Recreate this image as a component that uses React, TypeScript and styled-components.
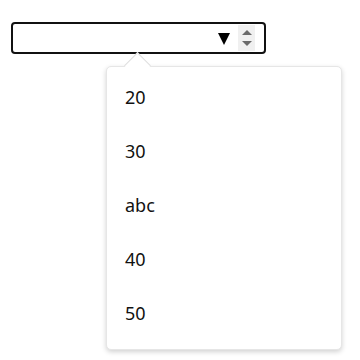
import React from 'react';
import styled, { createGlobalStyle } from 'styled-components';

const GlobalStyle = createGlobalStyle`
  html, body {
    margin: 0;
    padding: 0;
    background: #ffffff;
    font-family: "Noto Sans", "Open Sans", sans-serif;
  }
`;

const options = ['20', '30', 'abc', '40', '50'];

const Page = styled.div`
  width: 360px;
  height: 360px;
  padding: 22px 0 0 11px;
  box-sizing: border-box;
  position: relative;
`;

const Field = styled.div`
  width: 255px;
  height: 32px;
  box-sizing: border-box;
  border: 2px solid #111;
  border-radius: 4px;
  display: flex;
  align-items: center;
  justify-content: flex-end;
  padding-right: 9px;
  gap: 8px;
  background: #fff;
`;

const DropArrow = styled.span`
  width: 0;
  height: 0;
  border-left: 6.5px solid transparent;
  border-right: 6.5px solid transparent;
  border-top: 12px solid #000;
  margin-top: 1px;
`;

const Spinner = styled.div`
  width: 17px;
  height: 26px;
  background: #f0f0f0;
  display: flex;
  flex-direction: column;
  align-items: center;
  justify-content: center;
  gap: 6px;
`;

const SpinUp = styled.span`
  width: 0;
  height: 0;
  border-left: 5.5px solid transparent;
  border-right: 5.5px solid transparent;
  border-bottom: 5px solid #6a6a6a;
`;

const SpinDown = styled.span`
  width: 0;
  height: 0;
  border-left: 5.5px solid transparent;
  border-right: 5.5px solid transparent;
  border-top: 5px solid #6a6a6a;
`;

const Popup = styled.div`
  position: absolute;
  left: 106px;
  top: 66px;
  width: 236px;
  box-sizing: border-box;
  background: #fff;
  border: 1px solid #e6e6e6;
  border-radius: 5px;
  box-shadow: 0 2px 5px rgba(0, 0, 0, 0.18);
  padding: 3px 0 9px;

  &::before {
    content: '';
    position: absolute;
    left: 21px;
    top: -11px;
    width: 19px;
    height: 19px;
    box-sizing: border-box;
    background: #fff;
    border-left: 1px solid #dedede;
    border-top: 1px solid #dedede;
    transform: rotate(45deg);
  }
`;

const Option = styled.div`
  position: relative;
  height: 54px;
  display: flex;
  align-items: center;
  padding-left: 18px;
  font-size: 18px;
  color: #111;
`;

export default function App() {
  return (
    <Page>
      <GlobalStyle />
      <Field>
        <DropArrow />
        <Spinner>
          <SpinUp />
          <SpinDown />
        </Spinner>
      </Field>
      <Popup>
        {options.map((o) => (
          <Option key={o}>{o}</Option>
        ))}
      </Popup>
    </Page>
  );
}
